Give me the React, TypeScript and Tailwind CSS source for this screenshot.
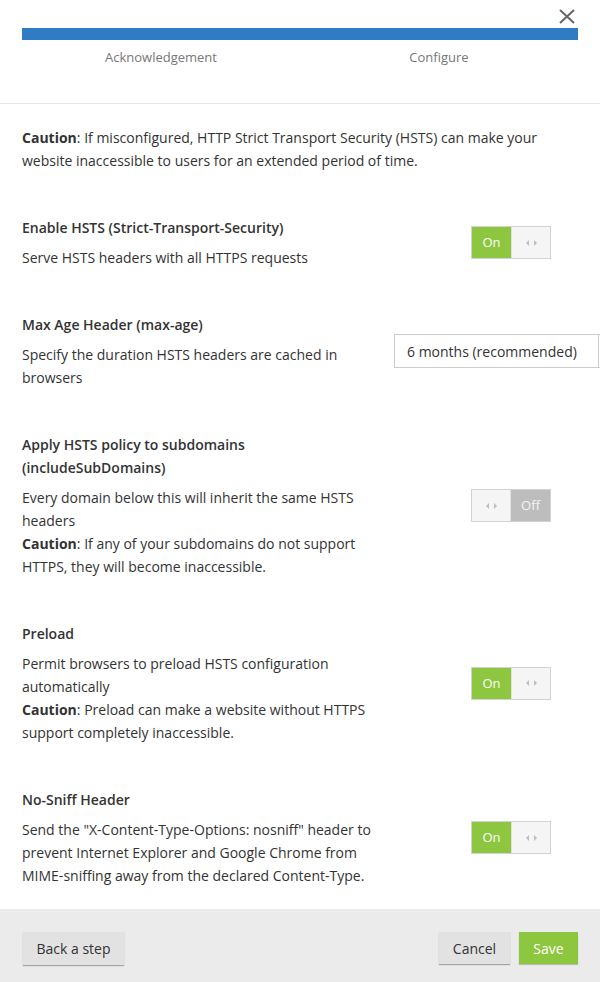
import React from "react";

function Arrows() {
  return (
    <svg width="11" height="6" viewBox="0 0 11 6" className="block">
      <path d="M3 0 L0 3 L3 6 Z" fill="#bdbdbd" />
      <path d="M8 0 L11 3 L8 6 Z" fill="#bdbdbd" />
    </svg>
  );
}

function Toggle({ on }: { on: boolean }) {
  return (
    <div className="flex w-[80px] h-[33px] border border-[#d2d2d2] text-[13px]">
      {on ? (
        <>
          <div className="w-1/2 flex items-center justify-center bg-[#8dc63f] text-white">On</div>
          <div className="w-1/2 flex items-center justify-center bg-[#f5f5f5] border-l border-[#e0e0e0]">
            <Arrows />
          </div>
        </>
      ) : (
        <>
          <div className="w-1/2 flex items-center justify-center bg-[#f5f5f5] border-r border-[#e0e0e0]">
            <Arrows />
          </div>
          <div className="w-1/2 flex items-center justify-center bg-[#bdbdbd] text-[#f4f4f4]">Off</div>
        </>
      )}
    </div>
  );
}

function Caution({ children }: { children: React.ReactNode }) {
  return (
    <p>
      <span className="font-bold">Caution</span>: {children}
    </p>
  );
}

function Setting({
  title,
  children,
  control,
}: {
  title: React.ReactNode;
  children: React.ReactNode;
  control: React.ReactNode;
}) {
  return (
    <div className="flex items-center">
      <div className="w-[372px] shrink-0 pr-[14px]">
        <h3 className="font-semibold">{title}</h3>
        <div className="mt-[7px]">{children}</div>
      </div>
      <div className="w-[234px] shrink-0 flex justify-center">{control}</div>
    </div>
  );
}

export default function App() {
  return (
    <div
      className="w-[600px] h-[982px] overflow-hidden bg-white flex flex-col text-[14px] leading-[23px] text-[#333]"
      style={{ fontFamily: '"Open Sans", "Noto Sans", sans-serif' }}
    >
      {/* Header with progress */}
      <header className="relative h-[104px] shrink-0 border-b border-[#e6e6e6] px-[22px] pt-[28px]">
        <button className="absolute top-[9px] right-[25px]" aria-label="Close">
          <svg width="16" height="15" viewBox="0 0 16 15" className="block">
            <path d="M1 1 L15 14 M15 1 L1 14" stroke="#666" strokeWidth="2" fill="none" />
          </svg>
        </button>
        <div className="h-[12px] bg-[#2f7bc4]" />
        <div className="grid grid-cols-2 mt-[8px] text-[13px] leading-[18px] text-[#777]">
          <div className="text-center">Acknowledgement</div>
          <div className="text-center">Configure</div>
        </div>
      </header>

      {/* Body */}
      <main className="flex-1 min-h-0 px-[22px] pt-[22px] flex flex-col gap-[44px]">
        <Caution>
          If misconfigured, HTTP Strict Transport Security (HSTS) can make your website inaccessible to users for an
          extended period of time.
        </Caution>

        <Setting title="Enable HSTS (Strict-Transport-Security)" control={<Toggle on />}>
          <p>Serve HSTS headers with all HTTPS requests</p>
        </Setting>

        <Setting
          title="Max Age Header (max-age)"
          control={
            <div className="w-[234px] flex h-[34px] border border-[#ccc] bg-white">
              <div className="w-[203px] shrink-0 flex items-center pl-[12px]">6 months (recommended)</div>
              <div className="flex-1 border-l border-[#ccc]" />
            </div>
          }
        >
          <p>Specify the duration HSTS headers are cached in browsers</p>
        </Setting>

        <Setting title="Apply HSTS policy to subdomains (includeSubDomains)" control={<Toggle on={false} />}>
          <p>Every domain below this will inherit the same HSTS headers</p>
          <Caution>If any of your subdomains do not support HTTPS, they will become inaccessible.</Caution>
        </Setting>

        <Setting title="Preload" control={<Toggle on />}>
          <p>Permit browsers to preload HSTS configuration automatically</p>
          <Caution>Preload can make a website without HTTPS support completely inaccessible.</Caution>
        </Setting>

        <Setting title="No-Sniff Header" control={<Toggle on />}>
          <p>
            Send the "X-Content-Type-Options: nosniff" header to prevent Internet Explorer and Google Chrome from
            MIME-sniffing away from the declared Content-Type.
          </p>
        </Setting>
      </main>

      {/* Footer */}
      <footer className="h-[73px] shrink-0 bg-[#ebebeb] flex items-start justify-between pl-[23px] pr-[22px] pt-[23px]">
        <button className="h-[33px] w-[101px] bg-[#e2e2e2] text-[#333] shadow-[0_1px_1px_rgba(0,0,0,0.3)]">
          Back a step
        </button>
        <div className="flex gap-[9px]">
          <button className="h-[32px] w-[71px] bg-[#e2e2e2] text-[#333] shadow-[0_1px_1px_rgba(0,0,0,0.3)]">
            Cancel
          </button>
          <button className="h-[32px] w-[59px] bg-[#8dc63f] text-white shadow-[0_1px_1px_rgba(0,0,0,0.2)]">
            Save
          </button>
        </div>
      </footer>
    </div>
  );
}
